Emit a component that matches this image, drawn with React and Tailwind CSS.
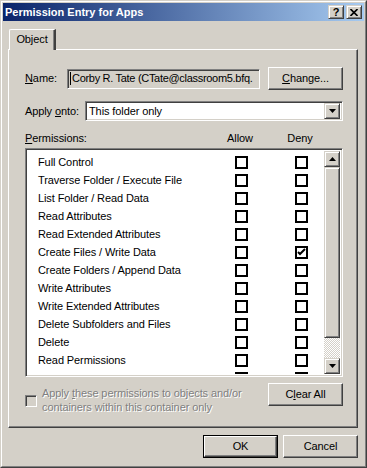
import React from "react";

const raised =
  "border border-t-[#d4d0c8] border-l-[#d4d0c8] border-r-[#404040] border-b-[#404040] shadow-[inset_1px_1px_0_#ffffff,inset_-1px_-1px_0_#808080]";
const pushButton =
  "border border-t-white border-l-white border-r-[#404040] border-b-[#404040] shadow-[inset_-1px_-1px_0_#808080] bg-[#d4d0c8]";
const sunken =
  "border border-t-[#808080] border-l-[#808080] border-r-white border-b-white shadow-[inset_1px_1px_0_#404040,inset_-1px_-1px_0_#d4d0c8]";

const permissions = [
  ["Full Control", false, false],
  ["Traverse Folder / Execute File", false, false],
  ["List Folder / Read Data", false, false],
  ["Read Attributes", false, false],
  ["Read Extended Attributes", false, false],
  ["Create Files / Write Data", false, true],
  ["Create Folders / Append Data", false, false],
  ["Write Attributes", false, false],
  ["Write Extended Attributes", false, false],
  ["Delete Subfolders and Files", false, false],
  ["Delete", false, false],
  ["Read Permissions", false, false],
  ["Change Permissions", false, false],
  ["Take Ownership", false, false],
];

function Box({ checked }) {
  return (
    <div className="w-[13px] h-[13px] border-2 border-black bg-white flex items-center justify-center">
      {checked ? (
        <svg width="9" height="9" viewBox="0 0 9 9">
          <path d="M1 4 L3 6 L8 1" stroke="#000" strokeWidth="2" fill="none" />
        </svg>
      ) : null}
    </div>
  );
}

function Arrow({ dir }) {
  return (
    <svg width="7" height="4" viewBox="0 0 7 4">
      {dir === "up" ? <path d="M3.5 0 L7 4 L0 4 Z" fill="#000" /> : <path d="M0 0 L7 0 L3.5 4 Z" fill="#000" />}
    </svg>
  );
}

export default function App() {
  return (
    <div
      className="w-[367px] h-[468px] bg-[#d4d0c8] border border-t-[#d4d0c8] border-l-[#d4d0c8] border-r-[#404040] border-b-[#404040] text-[11px] text-black overflow-hidden tracking-[-0.1px]"
      style={{ fontFamily: '"Liberation Sans", Arial, sans-serif' }}
    >
      <div className="h-full border border-t-white border-l-white border-r-[#808080] border-b-[#808080] p-px flex flex-col">
        {/* title bar */}
        <div className="h-[18px] flex items-center justify-between pl-[2px] pr-[2px] bg-[linear-gradient(to_right,#0a246a,#a6caf0)]">
          <span className="text-white font-bold text-[11px] leading-none tracking-normal">Permission Entry for Apps</span>
          <div className="flex gap-[2px]">
            <div className={`w-[16px] h-[14px] ${raised} bg-[#d4d0c8] flex items-center justify-center font-bold text-[11px] leading-none`}>?</div>
            <div className={`w-[16px] h-[14px] ${raised} bg-[#d4d0c8] flex items-center justify-center`}>
              <svg width="8" height="7" viewBox="0 0 8 7">
                <path d="M0.5 0 L7.5 7 M7.5 0 L0.5 7" stroke="#000" strokeWidth="1.6" />
              </svg>
            </div>
          </div>
        </div>

        <div className="flex-1 pl-[5px] pr-[6px] pt-[8px] flex flex-col">
          {/* tab */}
          <div className="relative z-10 -mb-px ml-px w-[47px] h-[21px] bg-[#d4d0c8] border-l border-t border-t-white border-l-white border-r-2 border-r-[#404040] shadow-[inset_-1px_0_0_#808080] rounded-tl-[2px] flex items-center justify-center pb-[2px]">
            Object
          </div>

          {/* panel */}
          <div className="w-[350px] h-[379px] border border-t-white border-l-white border-r-[#404040] border-b-[#404040] shadow-[inset_-1px_-1px_0_#808080] pt-[17px] pl-[16px]">
            <div className="flex items-center h-[23px]">
              <span className="w-[42px]">
                <span className="underline">N</span>ame:
              </span>
              <div className={`w-[193px] h-[20px] ${sunken} bg-[#d4d0c8] flex items-center pl-[2px] overflow-hidden whitespace-nowrap tracking-[-0.3px]`}>
                <span className="w-px h-[13px] bg-black mr-px shrink-0" />
                Corby R. Tate (CTate@classroom5.bfq.
              </div>
              <div className={`ml-[8px] w-[75px] h-[23px] ${pushButton} flex items-center justify-center`}>
                <span>
                  <span className="underline">C</span>hange...
                </span>
              </div>
            </div>

            <div className="flex items-center h-[20px] mt-[11px]">
              <span className="w-[60px]">
                Apply <span className="underline">o</span>nto:
              </span>
              <div className={`w-[258px] h-[20px] ${sunken} bg-white flex items-center justify-between pl-[3px] pr-[2px]`}>
                <span>This folder only</span>
                <div className={`w-[16px] h-[16px] ${raised} bg-[#d4d0c8] flex items-center justify-center`}>
                  <Arrow dir="down" />
                </div>
              </div>
            </div>

            <div className="flex items-center h-[16px] mt-[9px]">
              <span className="w-[195px]">
                <span className="underline">P</span>ermissions:
              </span>
              <span className="w-[40px] text-center">Allow</span>
              <span className="w-[20px]" />
              <span className="w-[40px] text-center">Deny</span>
            </div>

            <div className={`mt-[2px] w-[318px] h-[229px] ${sunken} bg-white p-[2px] flex`}>
              <div className="flex-1 overflow-hidden pt-[2px]">
                {permissions.map(([label, allow, deny]) => (
                  <div key={label} className="h-[18px] flex items-center">
                    <span className="w-[207px] pl-[10px] whitespace-nowrap">{label}</span>
                    <Box checked={allow} />
                    <span className="w-[47px]" />
                    <Box checked={deny} />
                  </div>
                ))}
              </div>
              <div className="w-[16px] flex flex-col">
                <div className={`h-[16px] ${raised} bg-[#d4d0c8] flex items-center justify-center`}>
                  <Arrow dir="up" />
                </div>
                <div className={`h-[171px] ${raised} bg-[#d4d0c8]`} />
                <div className="flex-1 bg-[repeating-conic-gradient(#d4d0c8_0%_25%,#ffffff_0%_50%)] bg-[length:2px_2px]" />
                <div className={`h-[16px] ${raised} bg-[#d4d0c8] flex items-center justify-center`}>
                  <Arrow dir="down" />
                </div>
              </div>
            </div>

            <div className="mt-[6px] w-[318px] flex justify-between">
              <div className="flex items-start">
                <div className={`mt-[12px] w-[12px] h-[12px] ${sunken} bg-[#d4d0c8]`} />
                <div className="ml-[5px] mt-[3px] leading-[14px] text-[#808080] [text-shadow:1px_1px_0_#ffffff]">
                  <div>
                    Apply <span className="underline">t</span>hese permissions to objects and/or
                  </div>
                  <div>containers within this container only</div>
                </div>
              </div>
              <div className={`w-[75px] h-[23px] ${pushButton} flex items-center justify-center`}>
                <span>
                  C<span className="underline">l</span>ear All
                </span>
              </div>
            </div>
          </div>

          {/* dialog buttons */}
          <div className="mt-[7px] flex justify-end gap-[5px]">
            <div className="w-[75px] h-[23px] border border-black">
              <div className={`h-full ${pushButton} flex items-center justify-center`}>OK</div>
            </div>
            <div className={`w-[75px] h-[23px] ${pushButton} flex items-center justify-center`}>Cancel</div>
          </div>
        </div>
      </div>
    </div>
  );
}
